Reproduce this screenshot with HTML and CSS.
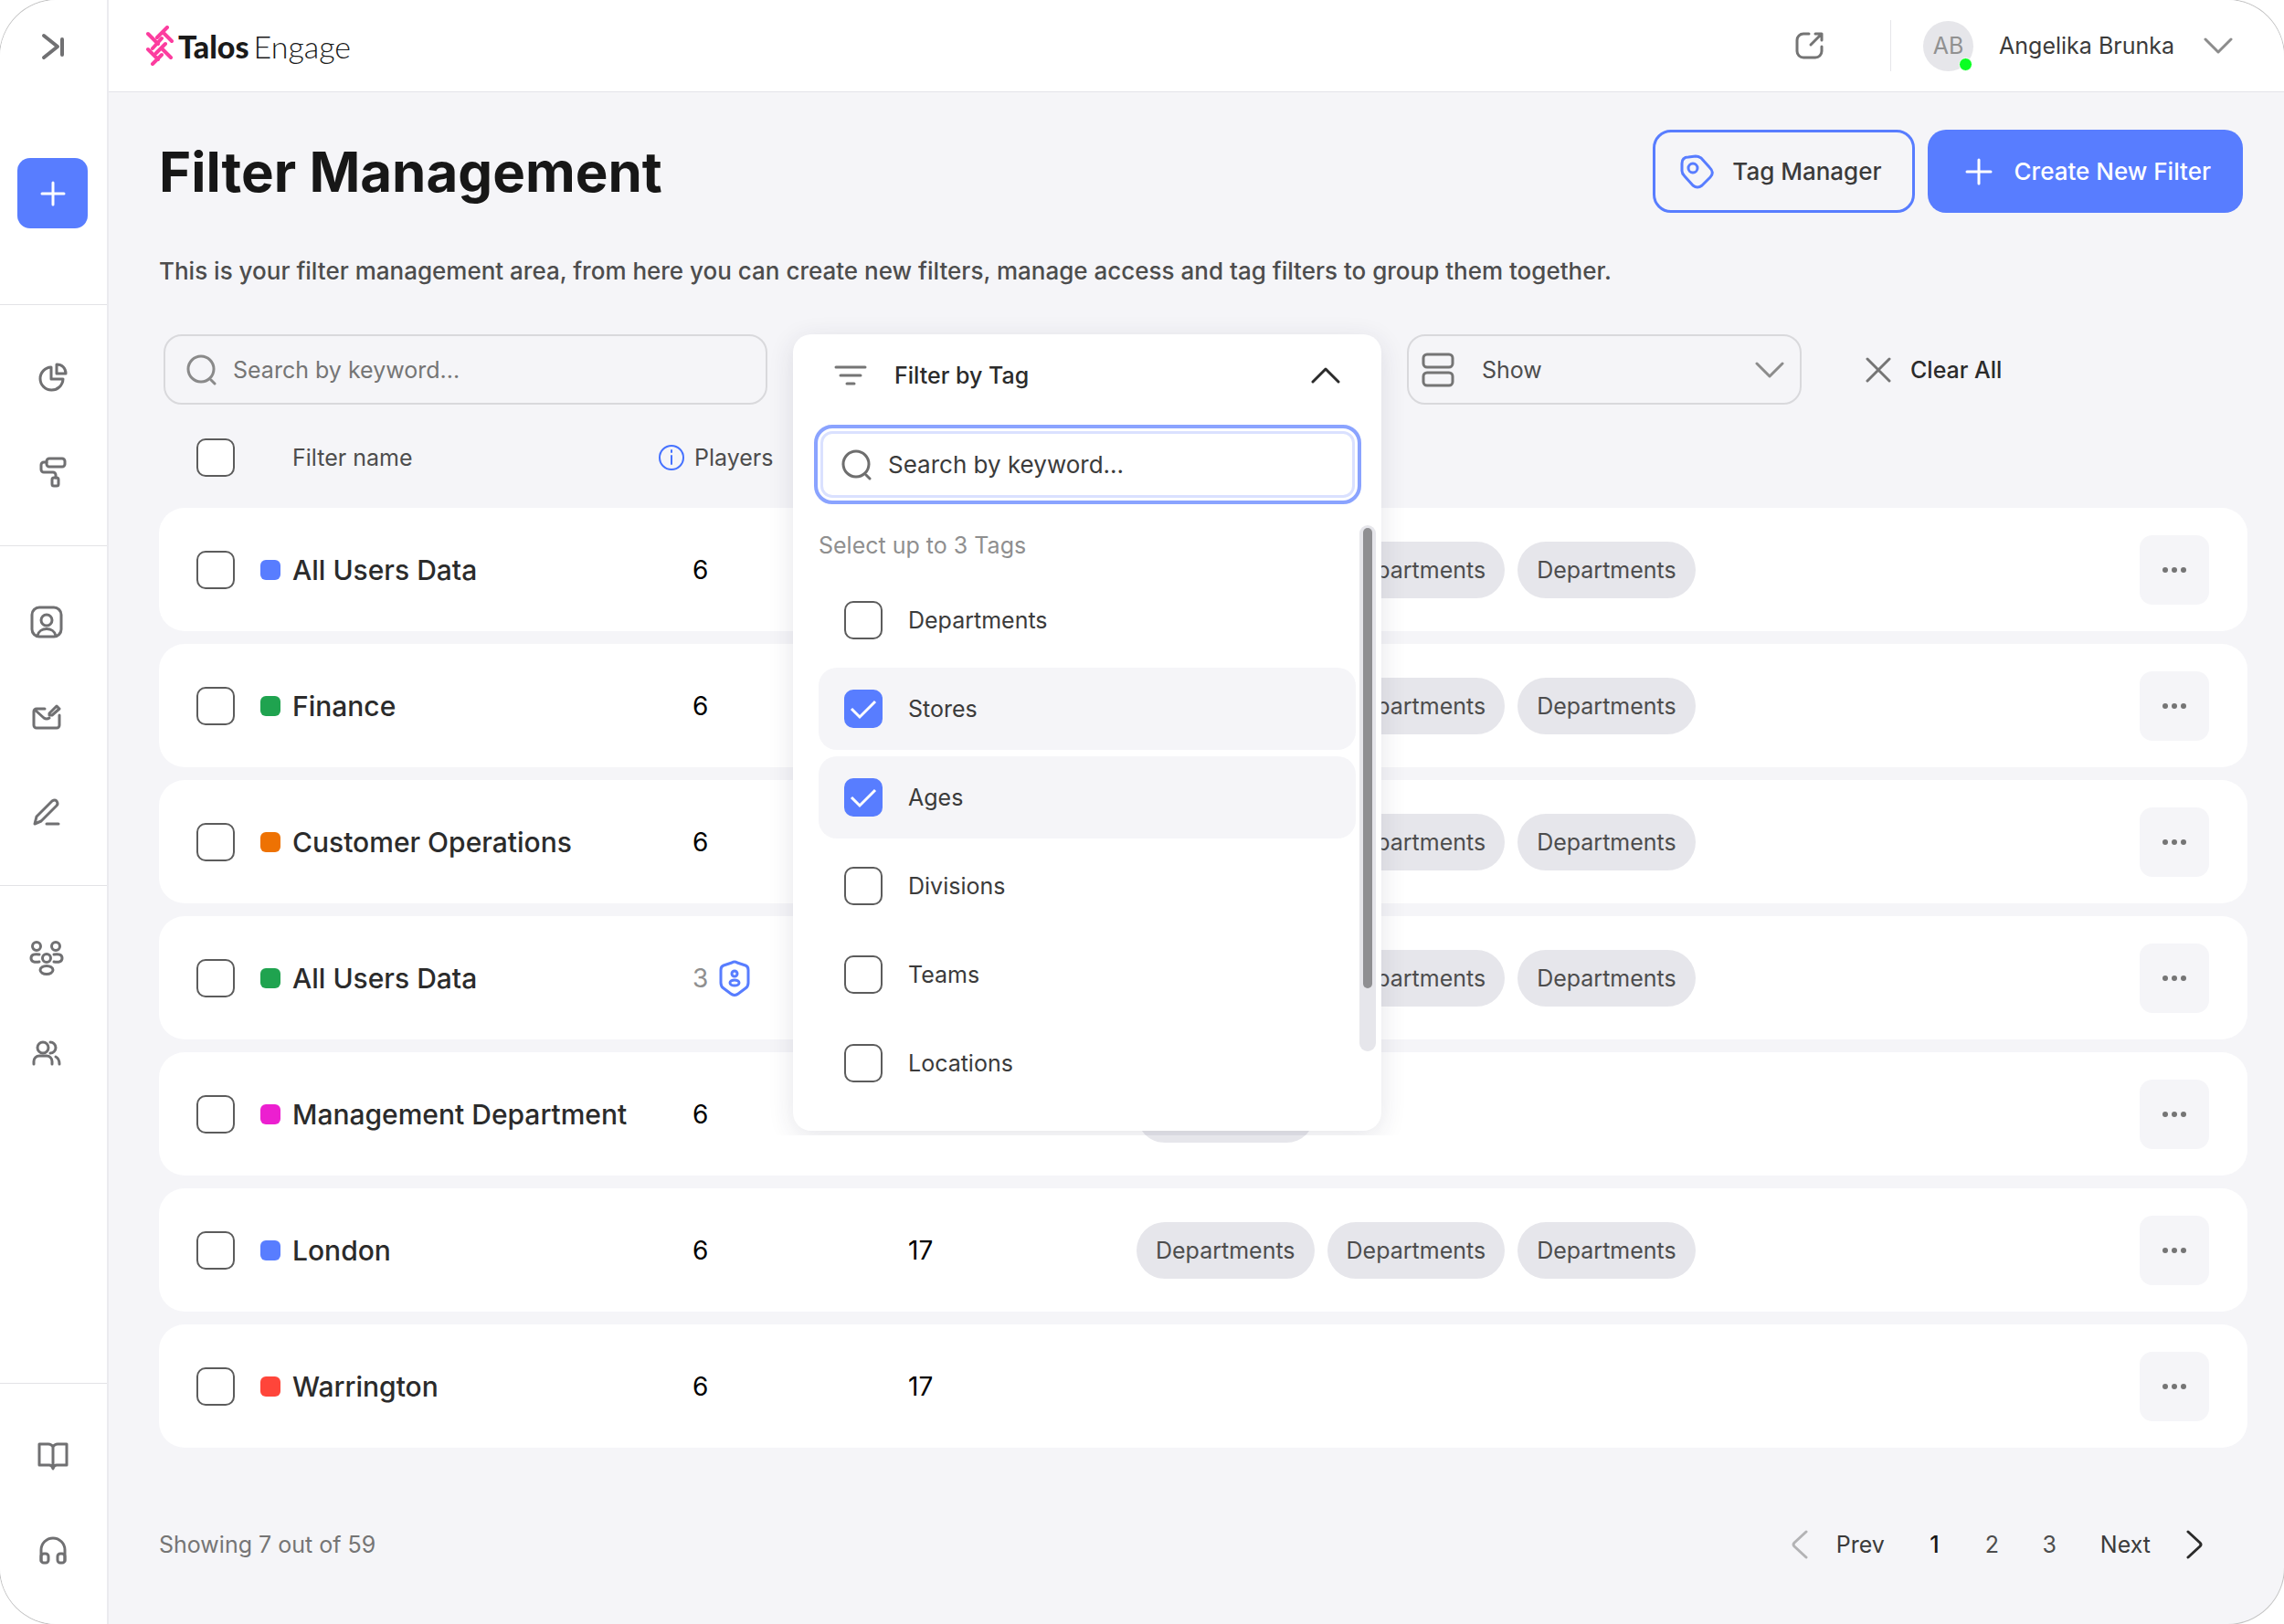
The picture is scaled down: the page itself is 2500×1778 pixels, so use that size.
FILE: index.html
```
<!DOCTYPE html>
<html lang="en">

<head>
  <meta charset="UTF-8">
  <meta name="viewport" content="width=device-width, initial-scale=1">
  <title>Filter Management</title>
  <link rel="stylesheet" href="styles.css">
</head>

<body>

  <div class="app">

    <nav class="sidebar">
      <div class="side-top">
        <button class="collapse" aria-label="Expand menu">
          <svg width="26" height="30" viewBox="0 0 26 30"><path d="M3 3l15 12L3 27M23 7v17" stroke-width="4"/></svg>
        </button>
        <button class="add" aria-label="Add">
          <svg width="28" height="28" viewBox="0 0 28 28"><path d="M14 2v24M2 14h24" stroke-width="3"/></svg>
        </button>
      </div>
      <div class="side-group">
        <a href="#" aria-label="Reports">
          <svg width="32" height="32" viewBox="0 0 32 32"><path d="M14 5a12.500 12.500 0 1 0 13 13H14zM20 2v10h10C30 6 26 2 20 2z"/></svg>
        </a>
        <a href="#" aria-label="Appearance">
          <svg width="30" height="34" viewBox="0 0 30 34"><rect x="8" y="2" width="20" height="9" rx="3"/><path d="M8 6H5a3 3 0 0 0-3 3v5a3 3 0 0 0 3 3h10a3 3 0 0 1 3 3v3"/><rect x="14" y="23" width="7" height="9" rx="2"/></svg>
        </a>
      </div>
      <div class="side-group people">
        <a href="#" aria-label="Profile">
          <svg width="36" height="36" viewBox="0 0 36 36"><rect x="2" y="2" width="32" height="32" rx="8"/><circle cx="18" cy="16" r="6"/><path d="M8 33c2-10 18-10 20 0"/></svg>
        </a>
        <a href="#" aria-label="Messages">
          <svg width="32" height="30" viewBox="0 0 32 30"><path d="M14 6H5a3 3 0 0 0-3 3v15a3 3 0 0 0 3 3h22a3 3 0 0 0 3-3V13M3 7l10 9q3 2 6 0"/><path d="M19 11l8-8 3 3-8 7-3 0z"/></svg>
        </a>
        <a href="#" aria-label="Edit">
          <svg width="32" height="32" viewBox="0 0 32 32"><path d="M3 29l2-8L22 4q3-2 5 0 2 3 0 5L10 26zM16 29h13"/></svg>
        </a>
      </div>
      <div class="side-group people grow">
        <a href="#" aria-label="Groups">
          <svg width="38" height="38" viewBox="0 0 38 38"><circle cx="8" cy="6" r="4.500"/><circle cx="29" cy="6" r="4.500"/><circle cx="19" cy="19" r="4.500"/><ellipse cx="19" cy="32" rx="7" ry="4.500"/><path d="M11 15c-5-1-9 0-9 4s4 5 9 4M27 15c5-1 9 0 9 4s-4 5-9 4"/></svg>
        </a>
        <a href="#" aria-label="Users">
          <svg width="32" height="28" viewBox="0 0 32 28"><circle cx="12" cy="8" r="6"/><path d="M2 26v-3a6 6 0 0 1 6-6h8a6 6 0 0 1 6 6v3M20 2a6 6 0 0 1 0 12M26 18q4 2 4 8"/></svg>
        </a>
      </div>
      <div class="side-group">
        <a href="#" aria-label="Docs">
          <svg width="34" height="32" viewBox="0 0 34 32"><path d="M17 6q-2-3-5-3H2v23h11q3 0 4 4 1-4 4-4h11V3H22q-3 0-5 3v23"/></svg>
        </a>
        <a href="#" aria-label="Support">
          <svg width="32" height="32" viewBox="0 0 32 32"><path d="M3 27V15a13 13 0 0 1 26 0v12"/><rect x="3" y="19" width="8" height="10" rx="3"/><rect x="21" y="19" width="8" height="10" rx="3"/></svg>
        </a>
      </div>
    </nav>

    <div class="content">

      <header class="topbar">
        <a href="#" class="logo">
          <svg width="30" height="44" viewBox="0 0 30 44"><path d="M23 2L12 13M18 7l10 10M2 9l11 11M17 14L7 25M21 20L11 30M17 25l10 10M2 26l11 11M17 32L7 42" stroke-width="4"/></svg>
          <span><b>Talos</b>Engage</span>
        </a>
        <button class="open" aria-label="Open in new window">
          <svg width="32" height="32" viewBox="0 0 32 32"><path d="M15 3H9a7 7 0 0 0-7 7v12a7 7 0 0 0 7 7h13a7 7 0 0 0 7-7v-5M22 3h7v7M29 3L17 15"/></svg>
        </button>
        <button class="user">
          <span class="avatar">AB<i></i></span>
          Angelika Brunka
          <svg width="32" height="18" viewBox="0 0 32 18"><path d="M2 2l14 14L30 2"/></svg>
        </button>
      </header>

      <main>
        <div class="heading">
          <h1>Filter Management</h1>
          <button class="btn outline">
            <svg width="38" height="38" viewBox="0 0 38 38"><path d="M3 10q0-7 7-7l8-1q3 0 6 2l9 10q6 6 1 11l-9 9q-5 4-10 0L6 24q-3-3-3-6z"/><circle cx="15" cy="15" r="5"/></svg>
            Tag Manager
          </button>
          <button class="btn primary">
            <svg width="30" height="30" viewBox="0 0 30 30"><path d="M15 2v26M2 15h26"/></svg>
            Create New Filter
          </button>
        </div>

        <p class="intro">This is your filter management area, from here you can create new filters, manage access and tag filters to group them together.</p>

        <div class="toolbar">
          <label class="search">
            <svg width="34" height="34" viewBox="0 0 34 34"><circle cx="16" cy="16" r="14"/><path d="M27 28l4 4"/></svg>
            <input type="text" placeholder="Search by keyword..." aria-label="Search by keyword">
          </label>

          <div class="tag-filter">
            <div class="panel">
              <button class="panel-head">
                <svg width="36" height="22" viewBox="0 0 36 22"><path d="M2 2h32M7 11h22M14 20h8"/></svg>
                Filter by Tag
                <svg class="up" width="32" height="18" viewBox="0 0 32 18"><path d="M2 16L16 2l14 14"/></svg>
              </button>
              <label class="search focused">
                <svg width="34" height="34" viewBox="0 0 34 34"><circle cx="16" cy="16" r="14"/><path d="M27 28l4 4"/></svg>
                <input type="text" placeholder="Search by keyword..." aria-label="Search tags">
              </label>
              <div class="options">
                <p>Select up to 3 Tags</p>
                <label><input type="checkbox">Departments</label>
                <label><input type="checkbox" checked>Stores</label>
                <label><input type="checkbox" checked>Ages</label>
                <label><input type="checkbox">Divisions</label>
                <label><input type="checkbox">Teams</label>
                <label><input type="checkbox">Locations</label>
                <div class="scrollbar"><div class="thumb"></div></div>
              </div>
            </div>
          </div>

          <div class="show">
            <svg width="36" height="38" viewBox="0 0 36 38"><rect x="2" y="2" width="32" height="14" rx="4"/><rect x="2" y="22" width="32" height="14" rx="4"/></svg>
            <select aria-label="Show"><option>Show</option></select>
            <svg class="down" width="32" height="18" viewBox="0 0 32 18"><path d="M2 2l14 14L30 2"/></svg>
          </div>

          <button class="clear">
            <svg width="28" height="28" viewBox="0 0 28 28"><path d="M2 2l24 24M26 2L2 26"/></svg>
            Clear All
          </button>
        </div>

        <table>
          <colgroup>
            <col class="col-check">
            <col class="col-name">
            <col class="col-players">
            <col class="col-count">
            <col>
            <col class="col-more">
          </colgroup>
          <thead>
            <tr>
              <th><input type="checkbox" aria-label="Select all"></th>
              <th class="name-head">Filter name</th>
              <th>
                <span class="players-head">
                  <svg width="28" height="28" viewBox="0 0 28 28"><circle cx="14" cy="14" r="13"/><path d="M14 12v9M14 6v2"/></svg>
                  Players
                </span>
              </th>
              <th></th>
              <th></th>
              <th></th>
            </tr>
          </thead>
          <tbody>
            <tr>
              <td><input type="checkbox" aria-label="Select All Users Data"></td>
              <td><span class="name"><i class="dot blue"></i>All Users Data</span></td>
              <td class="players">6</td>
              <td></td>
              <td><div class="tags"><span>Departments</span><span>Departments</span><span>Departments</span></div></td>
              <td><button class="more" aria-label="More"><svg width="28" height="6" viewBox="0 0 28 6"><circle cx="4" cy="3" r="3"/><circle cx="14" cy="3" r="3"/><circle cx="24" cy="3" r="3"/></svg></button></td>
            </tr>
            <tr>
              <td><input type="checkbox" aria-label="Select Finance"></td>
              <td><span class="name"><i class="dot green"></i>Finance</span></td>
              <td class="players">6</td>
              <td></td>
              <td><div class="tags"><span>Departments</span><span>Departments</span><span>Departments</span></div></td>
              <td><button class="more" aria-label="More"><svg width="28" height="6" viewBox="0 0 28 6"><circle cx="4" cy="3" r="3"/><circle cx="14" cy="3" r="3"/><circle cx="24" cy="3" r="3"/></svg></button></td>
            </tr>
            <tr>
              <td><input type="checkbox" aria-label="Select Customer Operations"></td>
              <td><span class="name"><i class="dot orange"></i>Customer Operations</span></td>
              <td class="players">6</td>
              <td></td>
              <td><div class="tags"><span>Departments</span><span>Departments</span><span>Departments</span></div></td>
              <td><button class="more" aria-label="More"><svg width="28" height="6" viewBox="0 0 28 6"><circle cx="4" cy="3" r="3"/><circle cx="14" cy="3" r="3"/><circle cx="24" cy="3" r="3"/></svg></button></td>
            </tr>
            <tr>
              <td><input type="checkbox" aria-label="Select All Users Data"></td>
              <td><span class="name"><i class="dot green"></i>All Users Data</span></td>
              <td class="players">
                <span class="limited">3
                  <svg width="34" height="40" viewBox="0 0 34 40"><path d="M14 3q3-2 6 0l9 3q3 1 3 5v14q0 4-3 6l-8 6q-4 3-8 0l-8-6q-3-2-3-6V11q0-4 3-5z"/><circle cx="17" cy="15" r="3"/><ellipse cx="17" cy="25" rx="5" ry="3"/></svg>
                </span>
              </td>
              <td></td>
              <td><div class="tags"><span>Departments</span><span>Departments</span><span>Departments</span></div></td>
              <td><button class="more" aria-label="More"><svg width="28" height="6" viewBox="0 0 28 6"><circle cx="4" cy="3" r="3"/><circle cx="14" cy="3" r="3"/><circle cx="24" cy="3" r="3"/></svg></button></td>
            </tr>
            <tr>
              <td><input type="checkbox" aria-label="Select Management Department"></td>
              <td><span class="name"><i class="dot pink"></i>Management Department</span></td>
              <td class="players">6</td>
              <td></td>
              <td><div class="tags"><span>Departments</span></div></td>
              <td><button class="more" aria-label="More"><svg width="28" height="6" viewBox="0 0 28 6"><circle cx="4" cy="3" r="3"/><circle cx="14" cy="3" r="3"/><circle cx="24" cy="3" r="3"/></svg></button></td>
            </tr>
            <tr>
              <td><input type="checkbox" aria-label="Select London"></td>
              <td><span class="name"><i class="dot blue"></i>London</span></td>
              <td class="players">6</td>
              <td>17</td>
              <td><div class="tags"><span>Departments</span><span>Departments</span><span>Departments</span></div></td>
              <td><button class="more" aria-label="More"><svg width="28" height="6" viewBox="0 0 28 6"><circle cx="4" cy="3" r="3"/><circle cx="14" cy="3" r="3"/><circle cx="24" cy="3" r="3"/></svg></button></td>
            </tr>
            <tr>
              <td><input type="checkbox" aria-label="Select Warrington"></td>
              <td><span class="name"><i class="dot red"></i>Warrington</span></td>
              <td class="players">6</td>
              <td>17</td>
              <td></td>
              <td><button class="more" aria-label="More"><svg width="28" height="6" viewBox="0 0 28 6"><circle cx="4" cy="3" r="3"/><circle cx="14" cy="3" r="3"/><circle cx="24" cy="3" r="3"/></svg></button></td>
            </tr>
          </tbody>
        </table>

        <footer>
          <span>Showing 7 out of 59</span>
          <div class="pages">
            <a href="#" class="prev">
              <svg width="18" height="32" viewBox="0 0 18 32"><path d="M16 2L3 14q-2 2 0 4l13 12"/></svg>
              Prev
            </a>
            <a href="#" class="current">1</a>
            <a href="#" class="page">2</a>
            <a href="#" class="page">3</a>
            <a href="#" class="next">
              Next
              <svg width="18" height="32" viewBox="0 0 18 32"><path d="M2 2l13 12q2 2 0 4L2 30"/></svg>
            </a>
          </div>
        </footer>
      </main>

    </div>
  </div>

</body>

</html>
```

FILE: styles.css
```
* {
  box-sizing: border-box;
}

body {
  margin: 0;
  background: #fff;
  font-family: Inter, "Liberation Sans", sans-serif;
  font-size: 25px;
  color: #3b3b3b;
}

svg {
  display: block;
  flex: none;
  fill: none;
  stroke: currentColor;
  stroke-width: 3;
  stroke-linecap: round;
  stroke-linejoin: round;
}

button {
  display: flex;
  align-items: center;
  padding: 0;
  border: none;
  background: none;
  font: inherit;
  color: inherit;
  cursor: pointer;
}

a {
  color: inherit;
  text-decoration: none;
}

input[type="checkbox"] {
  appearance: none;
  display: block;
  flex: none;
  width: 42px;
  height: 42px;
  margin: 0;
  border: 2px solid #5c5c5c;
  border-radius: 10px;
  background-color: #fff;
}

input[type="checkbox"]:checked {
  border: none;
  background: #587dff url("data:image/svg+xml,%3Csvg xmlns='http://www.w3.org/2000/svg' viewBox='0 0 42 42'%3E%3Cpath d='M8 21l9 9 17-17' fill='none' stroke='white' stroke-width='3'/%3E%3C/svg%3E");
}

.app {
  display: flex;
  min-height: 100vh;
  overflow: hidden;
  border-radius: 62px;
  box-shadow: 0 0 0 1px #c4c4c4;
  background: #f5f5f8;
}

/* sidebar */

.sidebar {
  display: flex;
  flex-direction: column;
  flex: none;
  width: 119px;
  border-right: 2px solid #ebebef;
  background: #fff;
  color: #707072;
}

.side-top {
  height: 333px;
  padding: 36px 19px 0;
}

.collapse {
  margin: 0 0 107px 26px;
}

.add {
  justify-content: center;
  width: 77px;
  height: 77px;
  border-radius: 14px;
  background: #587dff;
  color: #fff;
}

.side-group {
  padding: 27px 2px 28px 0;
  border-top: 1px solid #e3e3e6;
}

.side-group a {
  display: flex;
  align-items: center;
  justify-content: center;
  height: 104px;
}

.people {
  padding: 31px 16px 28px 0;
}

.grow {
  flex: 1;
  padding-top: 27px;
}

/* top bar */

.content {
  flex: 1;
  min-width: 0;
}

.topbar {
  display: flex;
  align-items: center;
  height: 101px;
  padding: 0 56px 0 41px;
  border-bottom: 1px solid #e3e3e9;
  background: #fff;
}

.logo {
  display: flex;
  align-items: center;
  gap: 5px;
  margin-right: auto;
  font-family: Lato, sans-serif;
  font-size: 34px;
  font-weight: 300;
  color: #1a1a1a;
}

.logo svg {
  color: #fc3d9f;
}

.logo b {
  margin-right: 5px;
  font-weight: 900;
}

.open {
  margin-right: 72px;
  color: #747474;
}

.user {
  gap: 28px;
  height: 56px;
  padding-left: 35px;
  border-left: 1px solid #e6e6ea;
}

.user svg {
  margin-left: 4px;
  color: #8c8c8c;
}

.avatar {
  position: relative;
  width: 55px;
  height: 55px;
  border-radius: 50%;
  background: #e6e6ea;
  line-height: 55px;
  color: #919191;
}

.avatar i {
  position: absolute;
  right: 1px;
  bottom: 0;
  width: 15px;
  height: 15px;
  border: 1px solid #fff;
  border-radius: 50%;
  background: #0aff22;
}

/* heading */

main {
  padding: 41px 40px 0 55px;
}

.heading {
  display: flex;
  align-items: center;
  gap: 14px;
  padding-right: 5px;
}

h1 {
  margin: 0 auto 0 0;
  font-size: 60px;
  line-height: 90px;
  color: #171717;
}

.btn {
  height: 91px;
  border-radius: 20px;
  font-size: 26px;
  font-weight: 500;
}

.outline {
  gap: 20px;
  padding: 0 33px 0 26px;
  border: 3px solid #587dff;
}

.outline svg {
  color: #587dff;
}

.primary {
  gap: 24px;
  padding: 0 35px 0 41px;
  background: #587dff;
  color: #fff;
}

.intro {
  margin: 44px 0 49px;
  font-size: 26px;
  font-weight: 500;
  line-height: 40px;
  color: #4d4d4d;
}

/* toolbar */

.toolbar {
  display: flex;
  gap: 28px;
  margin: 0 0 3px 5px;
}

.search {
  display: flex;
  align-items: center;
  flex: 0 1 661px;
  gap: 17px;
  height: 77px;
  padding: 0 23px;
  border: 2px solid #d9d9dc;
  border-radius: 20px;
  color: #8a8a8a;
}

.search input {
  flex: 1;
  min-width: 0;
  padding: 0;
  border: none;
  outline: none;
  background: none;
  font: inherit;
}

.search input::placeholder {
  color: #757575;
}

.tag-filter {
  position: relative;
  flex: 0 1 644px;
}

.panel {
  position: absolute;
  top: 0;
  left: 0;
  z-index: 1;
  width: 100%;
  padding: 0 22px 29px 23px;
  border-radius: 20px;
  background: #fff;
  box-shadow: 0 6px 28px rgba(40, 40, 70, 0.12);
  clip-path: inset(-40px -40px -5px -40px);
}

.panel-head {
  gap: 30px;
  width: 100%;
  height: 90px;
  padding: 0 23px 0 22px;
  font-weight: 500;
  color: #2b2b2b;
}

.panel-head svg:first-child {
  color: #757575;
}

.up {
  margin-left: auto;
}

.focused {
  height: 87px;
  margin: 9px 0 20px;
  padding: 0 26px;
  border: 4px solid #8aa3ff;
  box-shadow: inset 0 0 0 3px #fff, inset 0 0 0 6px #dae1ff;
  font-size: 26px;
  color: #6e6e6e;
}

.focused input::placeholder {
  color: #3b3b3b;
}

.options {
  position: relative;
  display: flex;
  flex-direction: column;
  gap: 7px;
  padding: 0 6px 0 5px;
}

.options p {
  margin: 0 0 4px;
  line-height: 51px;
  color: #8f8f8f;
}

.options label {
  display: flex;
  align-items: center;
  gap: 28px;
  height: 90px;
  padding-left: 28px;
  border-radius: 20px;
}

.options label:has(:checked) {
  background: #f5f5f8;
}

.scrollbar {
  position: absolute;
  top: 3px;
  right: -16px;
  width: 18px;
  height: 576px;
  padding: 3px 4px;
  border-radius: 9px;
  background: #e6e6eb;
}

.thumb {
  height: 504px;
  border-radius: 5px;
  background: #8f8f92;
}

.show {
  display: flex;
  align-items: center;
  flex: 0 1 432px;
  gap: 30px;
  height: 77px;
  padding: 0 17px 0 14px;
  border: 2px solid #d9d9dc;
  border-radius: 20px;
  color: #757575;
}

.show select {
  appearance: none;
  flex: 1;
  padding: 0;
  border: none;
  background: none;
  font: inherit;
  color: #4d4d4d;
}

.down {
  color: #8c8c8c;
}

.clear {
  gap: 21px;
  margin-left: 42px;
  font-weight: 500;
  color: #2b2b2b;
}

.clear svg {
  color: #757575;
}

/* table */

table {
  width: 100%;
  table-layout: fixed;
  border-spacing: 0 14px;
}

.col-check {
  width: 111px;
}

.col-name {
  width: 436px;
}

.col-players {
  width: 273px;
}

.col-count {
  width: 250px;
}

.col-more {
  width: 118px;
}

th {
  height: 82px;
  padding: 0;
  font-weight: 400;
  text-align: left;
  color: #4d4d4d;
}

.name-head {
  padding-left: 35px;
}

.players-head {
  display: flex;
  align-items: center;
  gap: 11px;
}

.players-head svg {
  stroke-width: 2;
  color: #4672ff;
}

td {
  height: 135px;
  padding: 0;
  background: #fff;
  font-size: 28px;
  color: #000;
}

th:first-child,
td:first-child {
  padding-left: 41px;
}

td:first-child {
  border-radius: 28px 0 0 28px;
}

td:last-child {
  border-radius: 0 28px 28px 0;
}

.name {
  display: flex;
  align-items: center;
  gap: 13px;
  font-size: 30px;
  font-weight: 500;
  white-space: nowrap;
  color: #2b2b2b;
}

.dot {
  width: 22px;
  height: 22px;
  border-radius: 6px;
}

.blue {
  background: #587dff;
}

.green {
  background: #1fa34f;
}

.orange {
  background: #ee7203;
}

.pink {
  background: #ec1fd0;
}

.red {
  background: #ff453a;
}

.players {
  padding-left: 37px;
}

.limited {
  display: flex;
  align-items: center;
  gap: 12px;
  color: #8f8f8f;
}

.limited svg {
  color: #587dff;
}

.tags {
  display: flex;
  gap: 14px;
}

.tags span {
  padding: 0 21px;
  border-radius: 31px;
  background: #e6e6eb;
  font-size: 25px;
  line-height: 62px;
  color: #4d4d4d;
}

.more {
  justify-content: center;
  width: 76px;
  height: 76px;
  border-radius: 14px;
  background: #f5f5f8;
  color: #757575;
}

.more svg {
  fill: currentColor;
  stroke: none;
}

/* footer */

footer {
  display: flex;
  align-items: center;
  justify-content: space-between;
  margin: 72px 49px 0 0;
  line-height: 40px;
  color: #757575;
}

.pages {
  display: flex;
  align-items: center;
  color: #4d4d4d;
}

.prev,
.next {
  display: flex;
  align-items: center;
  color: #3b3b3b;
}

.prev {
  gap: 31px;
}

.next {
  gap: 39px;
}

.prev svg {
  color: #b3b3b5;
}

.next svg {
  color: #2b2b2b;
}

.current,
.page {
  width: 63px;
  text-align: center;
}

.current {
  margin-left: 23px;
  font-weight: 500;
  color: #171717;
}

.next {
  margin-left: 24px;
}
```
